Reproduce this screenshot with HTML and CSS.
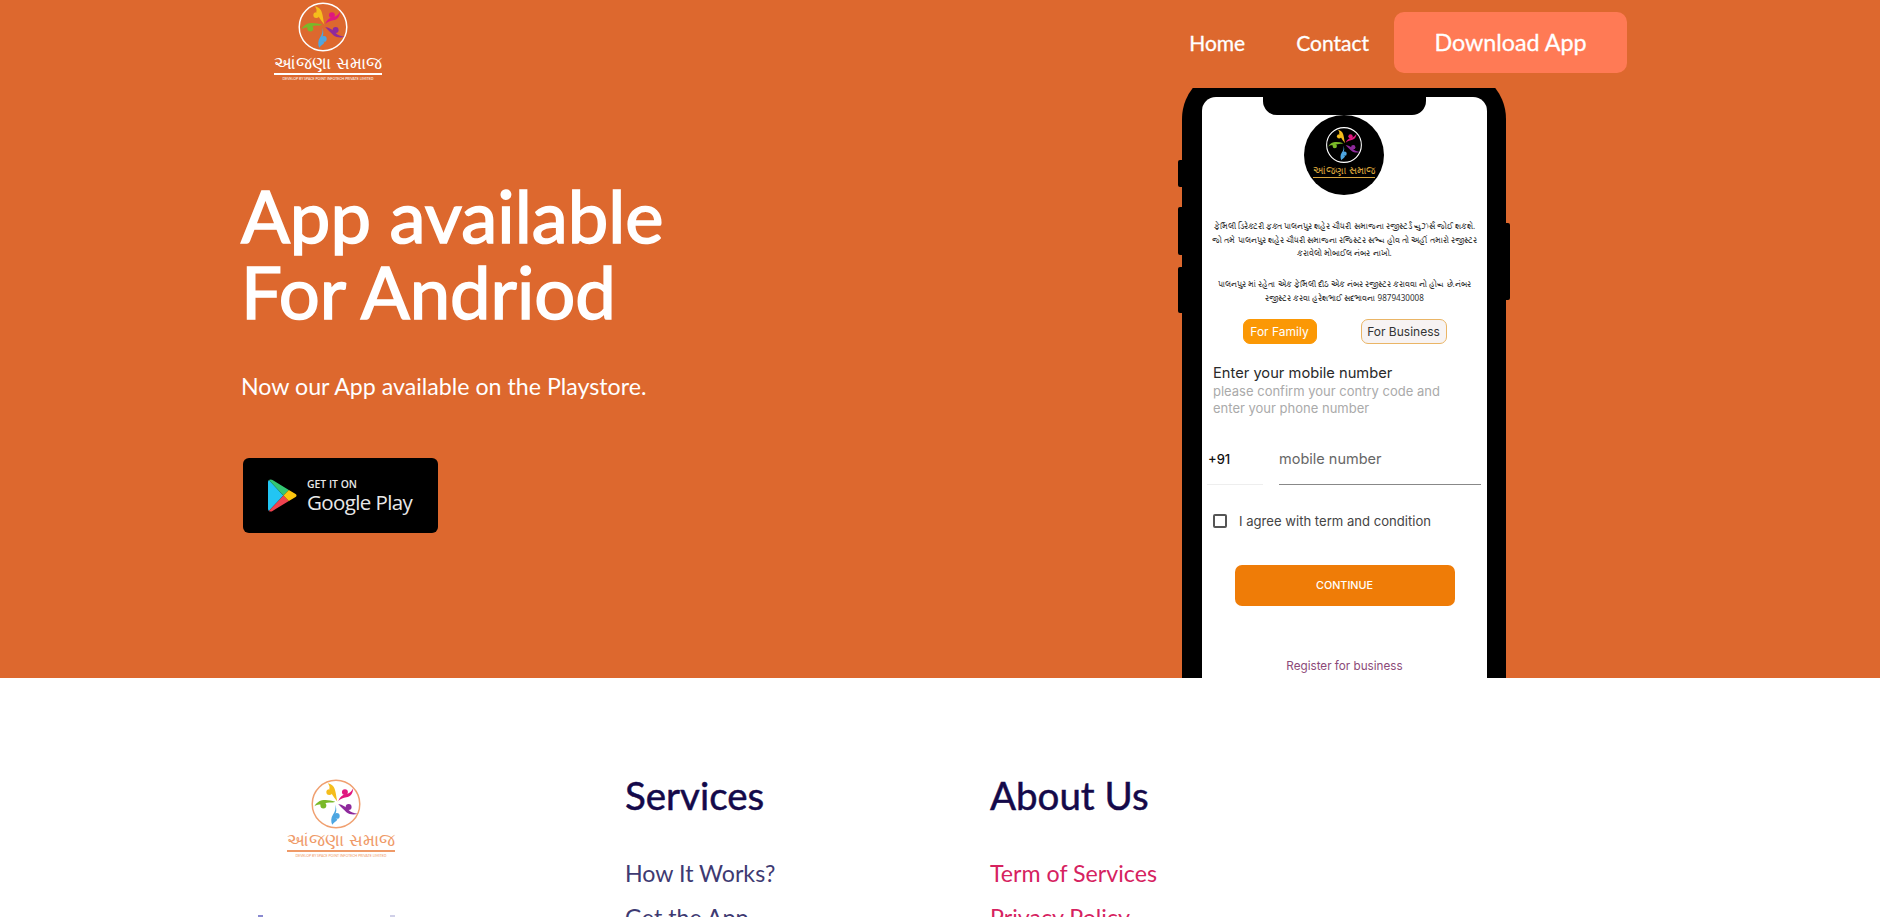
FILE: index.html
```html
<!DOCTYPE html>
<html lang="en">
<head>
    <meta charset="UTF-8">
    <meta name="viewport" content="width=device-width, initial-scale=1.0">
    <title>Anjana Samaj</title>
    <link rel="stylesheet" href="styles.css">
</head>
<body>
    <svg class="defs" width="0" height="0" aria-hidden="true">
        <defs>
            <g id="people">
                <path d="M2 -3 C0 -10 0 -18 -3 -23 C-5 -26 -8 -27 -11 -28 C-9 -25 -8 -23 -9 -21 C-7 -16 -4 -10 2 -3 Z" fill="#f5bd1c"/>
                <circle cx="-9" cy="-16" r="4" fill="#f5bd1c"/>
                <path d="M3 -4 C5 -9 8 -12 13 -13 C18 -14 21 -17 23 -21 C23 -14 19 -10 14 -9 C10 -8 6 -7 3 -4 Z" fill="#e0177f"/>
                <circle cx="12" cy="-16" r="4" fill="#e0177f"/>
                <path d="M3 0 C9 1 14 4 17 8 C20 11 24 12 29 13 C24 15 18 14 14 11 C10 7 6 4 3 0 Z" fill="#8e2a9c"/>
                <circle cx="17" cy="4" r="4" fill="#8e2a9c"/>
                <path d="M-1 1 C0 6 -1 10 -4 14 C-7 18 -7 24 -5 28 C-3 25 0 24 2 21 C-2 19 -2 15 0 11 C1 8 0 4 -1 1 Z" fill="#4da6e2"/>
                <circle cx="1" cy="16" r="4" fill="#4da6e2"/>
                <path d="M-1 -3 C-7 -5 -13 -6 -19 -5 C-23 -4 -27 -1 -29 3 C-26 1 -23 0 -21 1 C-17 0 -13 -2 -9 -2 C-6 -2 -3 -2 -1 -3 Z" fill="#7ab929"/>
                <circle cx="-17" cy="2" r="4" fill="#7ab929"/>
            </g>
            <symbol id="play-icon" viewBox="0 0 32 36">
                <path d="M1 1 L17 18 L1 35 C0 34 0 33 0 32 L0 4 C0 3 0 2 1 1 Z" fill="#22c5f3"/>
                <path d="M1 1 C2 0 4 0 5 1 L23 12 L17 18 Z" fill="#34c774"/>
                <path d="M1 35 L17 18 L23 24 L5 35 C4 36 2 36 1 35 Z" fill="#ef4350"/>
                <path d="M23 12 L30 16 C32 17 32 19 30 20 L23 24 L17 18 Z" fill="#fcc60e"/>
            </symbol>
        </defs>
    </svg>

    <section class="hero">
        <header class="navbar">
            <a class="logo" href="#">
                <svg class="logo-mark" viewBox="-35 -35 70 70">
                    <circle r="32" fill="none" stroke="#fff" stroke-width="2"/>
                    <use href="#people"/>
                </svg>
                <span class="logo-name">આંજણા સમાજ</span>
                <span class="logo-tag">DEVELOP BY SPACE POINT INFOTECH PRIVATE LIMITED</span>
            </a>
            <nav class="nav-links">
                <a href="#">Home</a>
                <a href="#">Contact</a>
                <a class="download-btn" href="#">Download App</a>
            </nav>
        </header>

        <div class="hero-body">
            <div class="hero-text">
                <h1>App available<br>For Andriod</h1>
                <p>Now our App available on the Playstore.</p>
                <a class="play-badge" href="#">
                    <svg class="play-icon"><use href="#play-icon"/></svg>
                    <span class="play-words">
                        <small>GET IT ON</small>
                        <strong>Google Play</strong>
                    </span>
                </a>
            </div>

            <div class="phone-frame">
                <div class="phone">
                    <span class="side-btn btn-a"></span>
                    <span class="side-btn btn-b"></span>
                    <span class="side-btn btn-c"></span>
                    <span class="side-btn btn-d"></span>
                    <div class="screen">
                        <div class="notch"></div>
                        <div class="app-logo">
                            <svg viewBox="-35 -35 70 70">
                                <circle r="32" fill="none" stroke="#fff" stroke-width="2"/>
                                <use href="#people"/>
                            </svg>
                            <span class="app-logo-name">આંજણા સમાજ</span>
                        </div>
                        <p class="notice">ફેમિલી ડિરેક્ટરી ફક્ત પાલનપુર શહેર ચૌધરી સમાજના રજીસ્ટર્ડ યુઝર્સ જોઈ શકશે.<br>જો તમે પાલનપુર શહેર ચૌધરી સમાજના રજિસ્ટર સભ્ય હોવ તો અહીં તમારો રજીસ્ટર<br>કરાવેલો મોબાઈલ નંબર નાખો.</p>
                        <p class="notice notice-two">પાલનપુર માં રહેતા એક ફેમિલી દીઠ એક નંબર રજીસ્ટર કરાવવા નો હોય છે.નંબર<br>રજીસ્ટર કરવા હરેશભાઈ સદભાવના 9879430008</p>
                        <div class="tabs">
                            <span class="tab tab-family">For Family</span>
                            <span class="tab tab-business">For Business</span>
                        </div>
                        <div class="intro">
                            <h2>Enter your mobile number</h2>
                            <p>please confirm your contry code and<br>enter your phone number</p>
                        </div>
                        <div class="phone-row">
                            <span class="code">+91</span>
                            <span class="number">mobile number</span>
                        </div>
                        <div class="agree">
                            <span class="checkbox"></span>
                            <span>I agree with term and condition</span>
                        </div>
                        <div class="continue">CONTINUE</div>
                        <div class="register">Register for business</div>
                    </div>
                </div>
            </div>
        </div>
    </section>

    <footer class="footer">
        <div class="footer-brand">
            <a class="footer-logo" href="#">
                <svg class="logo-mark" viewBox="-35 -35 70 70">
                    <circle r="32" fill="none" stroke="#f0a070" stroke-width="2"/>
                    <use href="#people"/>
                </svg>
                <span class="footer-name">આંજણા સમાજ</span>
                <span class="footer-tag">DEVELOP BY SPACE POINT INFOTECH PRIVATE LIMITED</span>
            </a>
            <div class="socials">
                <span class="social"></span>
                <span class="social social-light"></span>
            </div>
        </div>
        <div class="footer-col">
            <h3>Services</h3>
            <a href="#">How It Works?</a>
            <a href="#">Get the App</a>
        </div>
        <div class="footer-col footer-about">
            <h3>About Us</h3>
            <a href="#">Term of Services</a>
            <a href="#">Privacy Policy</a>
        </div>
    </footer>
</body>
</html>
```

FILE: styles.css
```css
* {
    margin: 0;
    padding: 0;
    box-sizing: border-box;
}

html, body {
    height: 917px;
    overflow: hidden;
}

body {
    font-family: Lato, "Noto Sans", sans-serif;
    background-color: #fff;
}

a {
    text-decoration: none;
    color: inherit;
}

.defs {
    position: absolute;
}

/* hero */
.hero {
    height: 678px;
    background-color: #dd682e;
    overflow: hidden;
    color: #fff;
}

.navbar {
    display: flex;
    justify-content: space-between;
    padding: 0 253px 0 272px;
    height: 88px;
}

.logo {
    display: flex;
    flex-direction: column;
    align-items: center;
    width: 112px;
}

.logo-mark {
    width: 52px;
    height: 52px;
    margin: 1px 10px 0 0;
    flex: none;
}

.logo-name {
    font-family: "Noto Sans", sans-serif;
    font-size: 17px;
    font-weight: 300;
    line-height: 20px;
    border-bottom: 2px solid #fff;
    white-space: nowrap;
}

.logo-tag {
    font-size: 3.5px;
    margin-top: 2px;
    white-space: nowrap;
}

.nav-links {
    display: flex;
    align-items: flex-start;
    font-size: 21px;
    -webkit-text-stroke: 0.3px #fff;
}

.nav-links a {
    margin-top: 28px;
    margin-right: 51px;
    line-height: 30px;
}

.nav-links .download-btn {
    margin: 12px 0 0 -26px;
    width: 233px;
    height: 61px;
    line-height: 60px;
    text-align: center;
    font-size: 23.3px;
    background-color: #ff7a55;
    border-radius: 10px;
}

.hero-body {
    display: flex;
    justify-content: space-between;
    padding: 0 370px 0 241px;
}

.hero-text h1 {
    font-size: 72.4px;
    font-weight: 400;
    line-height: 76px;
    margin-top: 89px;
    -webkit-text-stroke: 1.6px #fff;
}

.hero-text p {
    font-size: 23.2px;
    line-height: 32px;
    margin-top: 41px;
}

.play-badge {
    display: flex;
    align-items: center;
    width: 195px;
    height: 75px;
    margin: 56px 0 0 2px;
    padding-left: 25px;
    background-color: #000;
    border-radius: 6px;
}

.play-icon {
    width: 29px;
    height: 33px;
    flex: none;
}

.play-words {
    display: flex;
    flex-direction: column;
    margin-left: 10px;
    font-family: "Open Sans", sans-serif;
    color: #e8e8e8;
}

.play-words small {
    font-size: 10.4px;
    line-height: 12px;
    font-weight: 600;
}

.play-words strong {
    font-size: 20.5px;
    line-height: 24px;
    font-weight: 500;
    letter-spacing: -0.6px;
    white-space: nowrap;
}

/* phone mockup, its top edge is cut off by the frame */
.phone-frame {
    width: 332px;
    height: 590px;
    padding-left: 4px;
    overflow: hidden;
}

.phone {
    position: relative;
    width: 324px;
    height: 640px;
    margin-top: -19px;
    padding: 28px 19px 0 20px;
    background-color: #000;
    border-radius: 50px 50px 0 0;
}

.side-btn {
    position: absolute;
    background-color: #000;
    border-radius: 2px;
}

.btn-a { left: -4px; top: 91px; width: 6px; height: 27px; }
.btn-b { left: -4px; top: 138px; width: 6px; height: 48px; }
.btn-c { left: -4px; top: 198px; width: 6px; height: 46px; }
.btn-d { right: -4px; top: 154px; width: 6px; height: 77px; }

.screen {
    position: relative;
    height: 100%;
    background-color: #fff;
    border-radius: 14px 14px 0 0;
    color: #222;
    font-family: Inter, sans-serif;
}

.notch {
    position: absolute;
    left: 61px;
    top: 0;
    width: 163px;
    height: 18px;
    background-color: #000;
    border-radius: 0 0 14px 14px;
}

.app-logo {
    position: absolute;
    left: 102px;
    top: 18px;
    width: 80px;
    height: 80px;
    display: flex;
    flex-direction: column;
    align-items: center;
    background-color: #000;
    border-radius: 50%;
    overflow: hidden;
}

.app-logo svg {
    width: 38px;
    height: 38px;
    margin-top: 11px;
    flex: none;
}

.app-logo-name {
    font-family: "Noto Sans", sans-serif;
    font-size: 10.3px;
    line-height: 13px;
    color: #d9a53c;
    border-bottom: 1px solid #d9a53c;
    white-space: nowrap;
}

.notice {
    padding-top: 122px;
    font-family: "Noto Sans", sans-serif;
    font-size: 8.1px;
    line-height: 13.5px;
    text-align: center;
    color: #333;
    white-space: nowrap;
}

.notice-two {
    padding-top: 17.5px;
}

.tabs {
    display: flex;
    justify-content: center;
    gap: 44px;
    margin-top: 15px;
}

.tab {
    display: block;
    height: 25px;
    line-height: 23px;
    text-align: center;
    font-size: 12px;
    color: #333;
    background-color: #f7f3f3;
    border: 1px solid #eab566;
    border-radius: 7px;
}

.tab-family {
    width: 74px;
    background-color: #fb9805;
    border-color: #fb9805;
    color: #fff;
}

.tab-business {
    width: 86px;
}

.intro {
    padding: 19px 11px 0;
}

.intro h2 {
    font-size: 14.7px;
    font-weight: 400;
    line-height: 20px;
    color: #2a2a2a;
}

.intro p {
    font-size: 13px;
    line-height: 17px;
    color: #aaa;
    white-space: nowrap;
}

.phone-row {
    display: flex;
    gap: 16px;
    height: 46px;
    margin: 22px 6px 0 5px;
    line-height: 40px;
}

.code {
    width: 56px;
    padding-left: 1px;
    font-size: 13px;
    font-weight: 500;
    color: #111;
    border-bottom: 1px solid #eee;
}

.number {
    flex: 1;
    font-size: 14.5px;
    color: #666;
    border-bottom: 1px solid #888;
}

.agree {
    display: flex;
    align-items: center;
    gap: 12px;
    height: 18px;
    margin-top: 27px;
    padding-left: 11px;
    font-size: 13.1px;
    color: #444;
}

.checkbox {
    width: 14px;
    height: 14px;
    border: 2px solid #555;
    border-radius: 2px;
}

.continue {
    width: 220px;
    height: 41px;
    margin: 35px auto 0;
    line-height: 41px;
    text-align: center;
    font-size: 10.8px;
    font-weight: 500;
    color: #fff;
    background-color: #ef7c07;
    border-radius: 7px;
}

.register {
    margin-top: 51px;
    text-align: center;
    font-size: 11.7px;
    line-height: 18px;
    color: #8c4a78;
}

/* footer */
.footer {
    display: flex;
    height: 239px;
    padding-top: 99px;
    overflow: hidden;
    color: #14094a;
}

.footer-brand {
    width: 625px;
    padding-left: 286px;
}

.footer-logo {
    display: flex;
    flex-direction: column;
    align-items: center;
    width: 110px;
    color: #ef9a68;
}

.footer-name {
    font-family: "Noto Sans", sans-serif;
    font-size: 17px;
    font-weight: 300;
    line-height: 20px;
    border-bottom: 2px solid #ef9a68;
    white-space: nowrap;
}

.footer-tag {
    font-size: 3.5px;
    margin-top: 2px;
    white-space: nowrap;
}

.socials {
    display: flex;
    gap: 127px;
    margin: 57px 0 0 -28px;
}

.social {
    width: 5px;
    height: 5px;
    background-color: #8a8ad0;
}

.social-light {
    background-color: #d0d0e8;
}

.footer-col {
    display: flex;
    flex-direction: column;
    width: 365px;
}

.footer-col h3 {
    font-size: 38.5px;
    font-weight: 400;
    line-height: 48px;
    margin-top: -6px;
    margin-bottom: 39px;
    -webkit-text-stroke: 0.5px #14094a;
}

.footer-col a {
    font-size: 23.2px;
    line-height: 30px;
    margin-bottom: 13.5px;
    color: #3e3a72;
}

.footer-about a {
    color: #d6225f;
}
```
